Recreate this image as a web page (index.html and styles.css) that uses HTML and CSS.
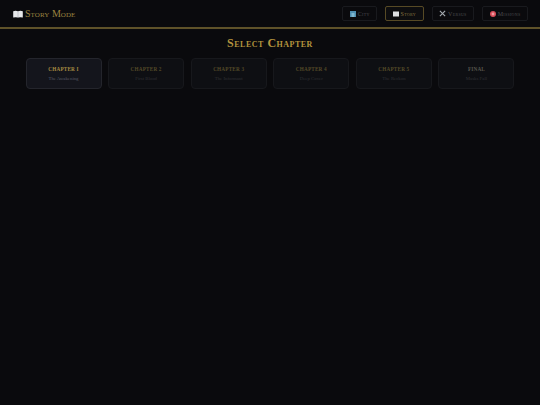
FILE: index.html
```html
<!DOCTYPE html>
<html lang="en">
<head>
<meta charset="utf-8">
<title>Story Mode</title>
<link rel="stylesheet" href="styles.css">
</head>
<body>
<header class="topbar">
  <h1 class="brand">
    <svg class="brand-icon" viewBox="0 0 12 10"><path d="M0 1.5 Q3 .3 6 1.5 Q9 .3 12 1.5 V9.5 Q9 8.5 6 9.5 Q3 8.5 0 9.5Z" fill="#e6e8ea"/><path d="M6 1.5V9.5" stroke="#9a9ea4" stroke-width=".6"/></svg>
    <span>Story Mode</span>
  </h1>
  <nav class="nav">
    <a class="nav-btn"><svg class="nav-icon" viewBox="0 0 6 6"><rect width="6" height="6" fill="#4f8fb0"/><rect x="1.5" y="2" width="3" height="4" fill="#7fb8d0"/></svg>City</a>
    <a class="nav-btn active"><svg class="nav-icon" viewBox="0 0 6 5"><rect width="6" height="5" fill="#dfe1e3"/></svg>Story</a>
    <a class="nav-btn"><svg class="nav-icon wide" viewBox="0 0 8 8"><path d="M1 1 7 7M7 1 1 7" stroke="#a4aab0" stroke-width="1.3"/></svg>Versus</a>
    <a class="nav-btn"><svg class="nav-icon" viewBox="0 0 6 6"><circle cx="3" cy="3" r="3" fill="#d84c58"/><circle cx="3" cy="3" r="1.4" fill="#ee9aa0"/></svg>Missions</a>
  </nav>
</header>
<main class="content">
  <h2 class="title">Select Chapter</h2>
  <section class="chapters">
    <div class="card current"><div class="card-name">Chapter I</div><div class="card-sub">The Awakening</div></div>
    <div class="card"><div class="card-name">Chapter 2</div><div class="card-sub">First Blood</div></div>
    <div class="card"><div class="card-name">Chapter 3</div><div class="card-sub">The Informant</div></div>
    <div class="card"><div class="card-name">Chapter 4</div><div class="card-sub">Deep Cover</div></div>
    <div class="card"><div class="card-name">Chapter 5</div><div class="card-sub">The Reckon</div></div>
    <div class="card"><div class="card-name final">Final</div><div class="card-sub">Masks Fall</div></div>
  </section>
</main>
</body>
</html>
```
FILE: styles.css
```css
* { box-sizing: border-box; }
html, body { margin: 0; height: 100%; }
body {
  background: #0a0a0d;
  font-family: "Liberation Serif", serif;
  overflow: hidden;
}
.topbar {
  height: 29px;
  display: flex;
  align-items: center;
  justify-content: space-between;
  padding: 0 12px 0 13px;
  border-bottom: 2px solid #5f5229;
}
.brand {
  margin: 0;
  display: flex;
  align-items: center;
  gap: 2px;
  font-size: 10px;
  font-weight: 400;
  font-variant: small-caps;
  letter-spacing: .05px;
  color: #9a8440;
}
.brand-icon { width: 10px; height: 8px; }
.nav { display: flex; gap: 8px; }
.nav-btn {
  height: 14.5px;
  padding: 0 6.5px;
  display: flex;
  align-items: center;
  gap: 2px;
  border: 1px solid #191a1e;
  border-radius: 2px;
  font-size: 6px;
  font-variant: small-caps;
  letter-spacing: .3px;
  color: #4c4d50;
}
.nav-btn.active { border-color: #574a25; color: #8a7740; background: #0d0d0f; }
.nav-icon { width: 6px; height: 6px; }
.nav-icon.wide { width: 7px; height: 7px; }
.content { padding: 7px 25.5px 0; }
.title {
  margin: 0 0 8px;
  text-align: center;
  font-size: 12px;
  line-height: 14px;
  font-weight: 700;
  font-variant: small-caps;
  letter-spacing: .5px;
  color: #b4943e;
}
.chapters {
  display: grid;
  grid-template-columns: repeat(6, 76px);
  justify-content: space-between;
  width: 489px;
}
.card {
  height: 31px;
  padding-top: 5.5px;
  text-align: center;
  background: #0e0f13;
  border: 1px solid #17181c;
  border-radius: 4px;
}
.card.current { background: #14151c; border-color: #24252c; }
.card-name {
  font-size: 5.2px;
  line-height: 8px;
  font-weight: 700;
  text-transform: uppercase;
  letter-spacing: .2px;
  color: #544a28;
}
.card-name.final { color: #58564d; }
.current .card-name { color: #a88c42; }
.card-sub {
  margin-top: 2.5px;
  font-size: 4.8px;
  line-height: 7px;
  color: #2f3035;
}
.current .card-sub { color: #575965; }
```
